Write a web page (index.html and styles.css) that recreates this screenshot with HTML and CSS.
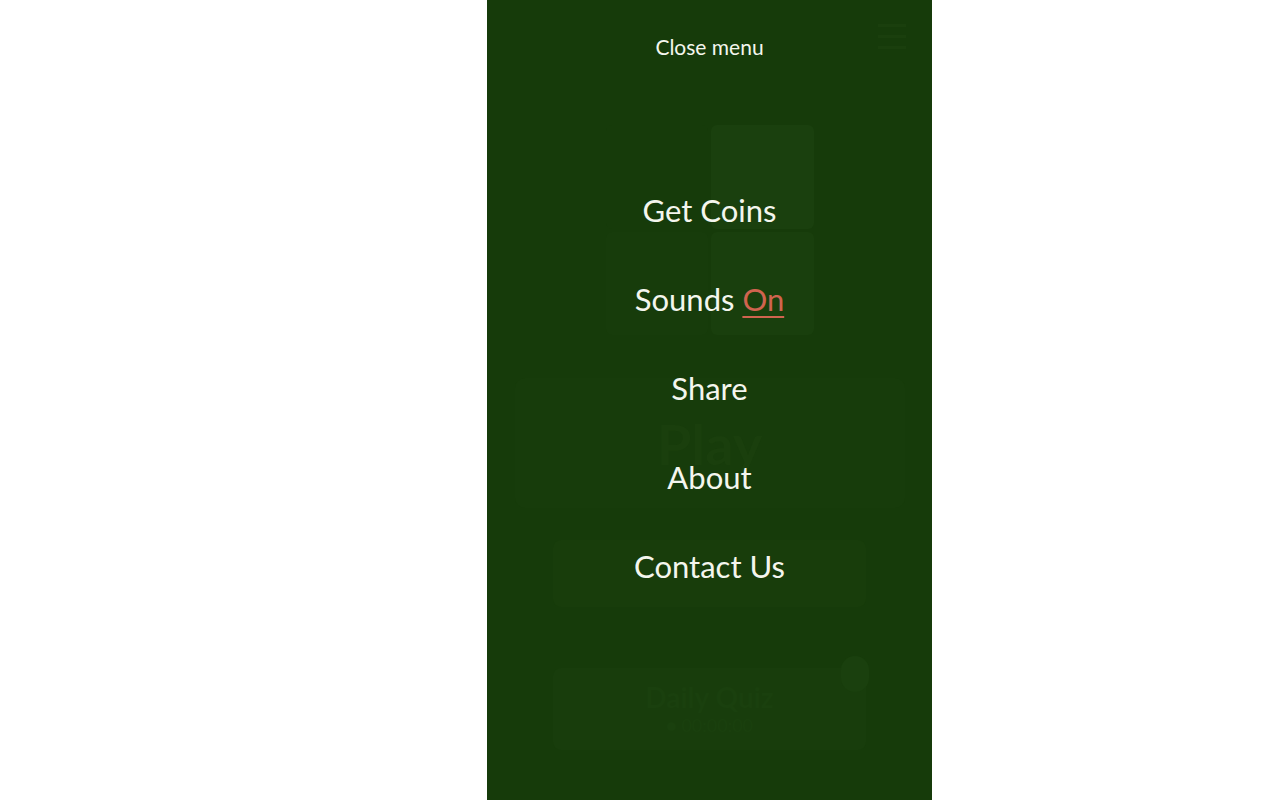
FILE: index.html
```html
<!DOCTYPE html>
<html>
<head>
<meta charset="utf-8">
<link rel="stylesheet" href="styles.css">
</head>
<body>
<div class="page">
  <div class="app">
    <div class="under">
      <div class="topbar">
        <div class="burger"><span></span><span></span><span></span></div>
      </div>
      <div class="logo">
        <div class="tile t1"></div><div class="tile t2"></div>
        <div class="tile t3"></div><div class="tile t4"></div>
      </div>
      <div class="play">Play</div>
      <div class="btn2">Levels</div>
      <div class="quiz">
        <div class="quiz-title">Daily Quiz</div>
        <div class="quiz-sub">&#9679; 00:00:00</div>
        <div class="badge"></div>
      </div>
    </div>
    <nav class="menu">
      <div class="close">Close menu</div>
      <ul class="items">
        <li>Get Coins</li>
        <li>Sounds <span class="on">On</span></li>
        <li>Share</li>
        <li>About</li>
        <li>Contact Us</li>
      </ul>
    </nav>
  </div>
</div>
</body>
</html>
```
FILE: styles.css
```css
html, body {
  margin: 0;
  padding: 0;
  background: #ffffff;
  height: 100%;
}
.page {
  padding-left: 487px;
  height: 800px;
}
.app {
  position: relative;
  width: 445px;
  height: 800px;
  background: #163b0a;
  overflow: hidden;
  font-family: "Lato", "Open Sans", sans-serif;
}
.under {
  display: flex;
  flex-direction: column;
  align-items: center;
}
.topbar {
  align-self: stretch;
  height: 125px;
  display: flex;
  justify-content: flex-end;
  align-items: flex-start;
}
.burger {
  margin: 24px 26px 0 0;
  width: 28px;
  display: flex;
  flex-direction: column;
  gap: 8px;
}
.burger span {
  display: block;
  height: 3px;
  background: #1a3f0d;
}
.logo {
  width: 208px;
  height: 210px;
  display: grid;
  grid-template-columns: 1fr 1fr;
  gap: 3px;
}
.tile { border-radius: 6px; }
.t1 { background: #163b0a; }
.t2 { background: #1a400e; }
.t3 { background: #173c0b; }
.t4 { background: #193f0d; }
.play {
  margin-top: 43px;
  width: 390px;
  height: 130px;
  border-radius: 10px;
  background: #173c0b;
  color: #1a3f0d;
  font-size: 56px;
  font-weight: 700;
  display: flex;
  align-items: center;
  justify-content: center;
}
.btn2 {
  margin-top: 32px;
  width: 313px;
  height: 67px;
  border-radius: 8px;
  background: #183d0b;
  color: #183d0b;
  font-size: 22px;
  display: flex;
  align-items: center;
  justify-content: center;
}
.quiz {
  position: relative;
  margin-top: 61px;
  width: 313px;
  height: 82px;
  border-radius: 8px;
  background: #183d0c;
  display: flex;
  flex-direction: column;
  align-items: center;
  justify-content: center;
  color: #1a400e;
}
.quiz-title { font-size: 28px; font-weight: 700; line-height: 32px; }
.quiz-sub { font-size: 18px; line-height: 24px; }
.badge {
  position: absolute;
  right: -3px;
  top: -12px;
  width: 28px;
  height: 36px;
  border-radius: 14px;
  background: #1a400e;
}
.menu {
  position: absolute;
  inset: 0;
  display: flex;
  flex-direction: column;
  align-items: center;
  color: #f4f6ee;
}
.close {
  margin-top: 33px;
  font-size: 21px;
  line-height: 28px;
}
.items {
  list-style: none;
  margin: 129px 0 0 0;
  padding: 0;
  display: flex;
  flex-direction: column;
  align-items: center;
  gap: 49px;
}
.items li {
  font-size: 31px;
  line-height: 40px;
}
.on {
  color: #d0644f;
  text-decoration: underline;
  text-decoration-thickness: 2px;
  text-underline-offset: 5px;
}
```
